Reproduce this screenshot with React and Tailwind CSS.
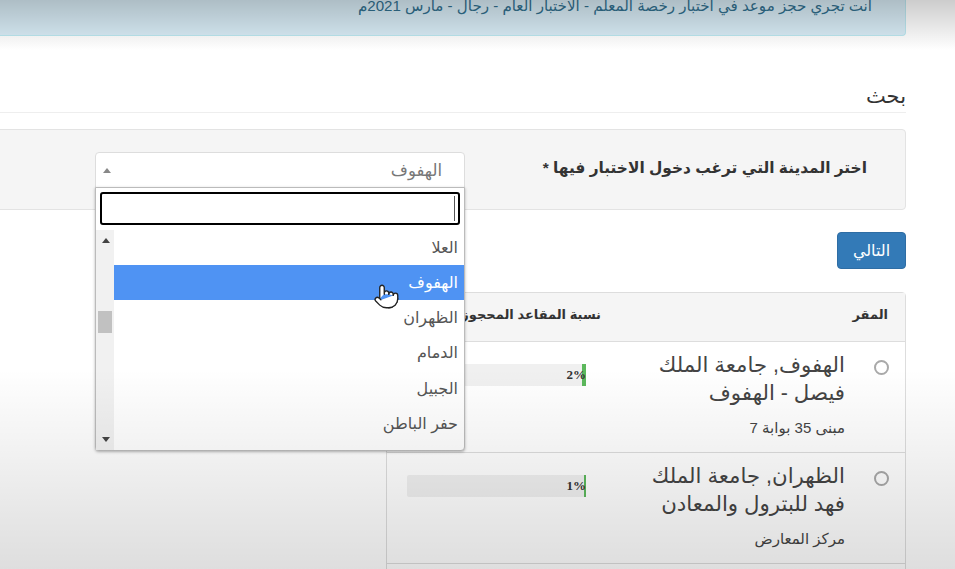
import React from "react";
import { Pointer } from "lucide-react";

const cities = ["العلا", "الهفوف", "الظهران", "الدمام", "الجبيل", "حفر الباطن"];

const centers = [
  { name: "الهفوف, جامعة الملك فيصل - الهفوف", place: "مبنى 35 بوابة 7", pct: 2 },
  { name: "الظهران, جامعة الملك فهد للبترول والمعادن", place: "مركز المعارض", pct: 1 },
];

function CenterRow({ center }) {
  return (
    <div className="flex h-[111px] border-t border-[#ddd] pt-[9px]">
      <div className="w-[60px] shrink-0 pr-[16px] pt-[9px]">
        <div className="h-[15px] w-[15px] rounded-full border-2 border-[#a9a9a9] bg-white"></div>
      </div>
      <div className="w-[200px] shrink-0">
        <div className="text-[21.3px] leading-[28px] text-[#444]">{center.name}</div>
        <div className="mt-[11px] text-[15px] leading-[20px] text-[#444]">{center.place}</div>
      </div>
      <div className="ml-[20px] mr-[59px] mt-[13px] h-[22px] w-[179px] shrink-0 rounded-[2px] bg-[#f0f0f0]">
        <div className="relative flex h-full items-center">
          <div className="h-full bg-[#5cb85c]" style={{ width: center.pct * 1.8 }}></div>
          <span className="absolute right-0 font-['Liberation_Serif'] text-[13px] font-bold text-[#333]" dir="ltr">
            {center.pct}%
          </span>
        </div>
      </div>
    </div>
  );
}

export default function App() {
  return (
    <div
      dir="rtl"
      className="relative h-[569px] w-[955px] overflow-hidden bg-white font-['Liberation_Sans','DejaVu_Sans',sans-serif] text-[#333]"
    >
      <div className="mr-[49px] w-[1000px]">
        <div className="flex h-[36px] items-end rounded-br-[4px] border border-t-0 border-[#bce8f1] bg-[#d9edf7] pb-[19px] pr-[33px] text-[15.1px] leading-[20px] text-[#31708f]">
          انت تجري حجز موعد في اختبار رخصة المعلم - الاختبار العام - رجال - مارس 2021م
        </div>

        <h3 className="mt-[44px] h-[33px] border-b border-[#eee] text-[21px] leading-[32px] text-[#333]">بحث</h3>

        <div className="relative mt-[16px] flex h-[81px] rounded-[4px] border border-[#e3e3e3] bg-[#f5f5f5] pr-[38px] pt-[22px]">
          <label className="w-[402px] shrink-0 pt-[4px] text-[15.4px] font-bold leading-[24px]">
            اختر المدينة التي ترغب دخول الاختبار فيها *
          </label>
          <div className="relative h-[36px] w-[370px] shrink-0">
            <div className="flex h-full items-center justify-between rounded-t-[4px] border border-[#ddd] bg-white pl-[7px] pr-[22px] text-[16.5px] text-[#777]">
              <span>الهفوف</span>
              <div className="h-0 w-0 border-x-[4px] border-b-[5px] border-x-transparent border-b-[#888]"></div>
            </div>
            <div className="absolute right-0 top-[35px] z-10 w-[370px] rounded-b-[4px] border border-[#bbb] bg-white shadow-[0_1px_3px_rgba(0,0,0,0.3)]">
              <div className="px-[4px] pb-[5px] pt-[4px]">
                <div className="flex h-[33px] items-center rounded-[3px] border-2 border-black bg-white pr-[3px]">
                  <div className="h-[25px] w-[1px] bg-[#555]"></div>
                </div>
              </div>
              <div className="flex h-[220px]">
                <ul className="flex-1 text-[16px] text-[#555]">
                  {cities.map((city) => (
                    <li
                      key={city}
                      className={
                        city === "الهفوف"
                          ? "flex h-[35px] items-center bg-[#4f93f3] pr-[6px] text-white"
                          : "flex h-[35.4px] items-center pr-[6px]"
                      }
                    >
                      {city}
                    </li>
                  ))}
                </ul>
                <div className="relative w-[18px] shrink-0 bg-[#f1f1f1]">
                  <div className="absolute left-[6px] top-[8px] h-0 w-0 border-x-[4px] border-b-[5px] border-x-transparent border-b-[#444]"></div>
                  <div className="absolute left-[2px] top-[81px] h-[22px] w-[14px] bg-[#c1c1c1]"></div>
                  <div className="absolute bottom-[8px] left-[6px] h-0 w-0 border-x-[4px] border-t-[5px] border-x-transparent border-t-[#444]"></div>
                </div>
              </div>
            </div>
          </div>
        </div>

        <div className="mt-[22px] flex">
          <button className="h-[37px] w-[69px] rounded-[4px] border border-[#2e6da4] bg-[#337ab7] text-[16px] text-white">
            التالي
          </button>
        </div>

        <div className="mt-[23px] w-[520px] rounded-t-[4px] border border-[#ddd]">
          <div className="flex h-[48px] items-center bg-[#f5f5f5] pb-[4px] text-[13px] font-bold">
            <div className="w-[304px] shrink-0 pr-[17px]">المقر</div>
            <div className="whitespace-nowrap">نسبة المقاعد المحجوزة</div>
          </div>
          {centers.map((center) => (
            <CenterRow key={center.place} center={center} />
          ))}
          <div className="h-[20px] border-t border-[#ddd]"></div>
        </div>
      </div>

      <Pointer
        className="absolute left-[373px] top-[282px] z-20 h-[29px] w-[27px]"
        fill="#fff"
        stroke="#222"
        strokeWidth={1.2}
      />

      <div className="pointer-events-none absolute inset-x-0 top-0 z-30 h-[50px] bg-gradient-to-b from-[rgba(0,0,0,0.2)] to-transparent"></div>
      <div className="pointer-events-none absolute inset-x-0 bottom-0 z-30 h-[200px] bg-gradient-to-b from-transparent to-[rgba(0,0,0,0.13)]"></div>
    </div>
  );
}
